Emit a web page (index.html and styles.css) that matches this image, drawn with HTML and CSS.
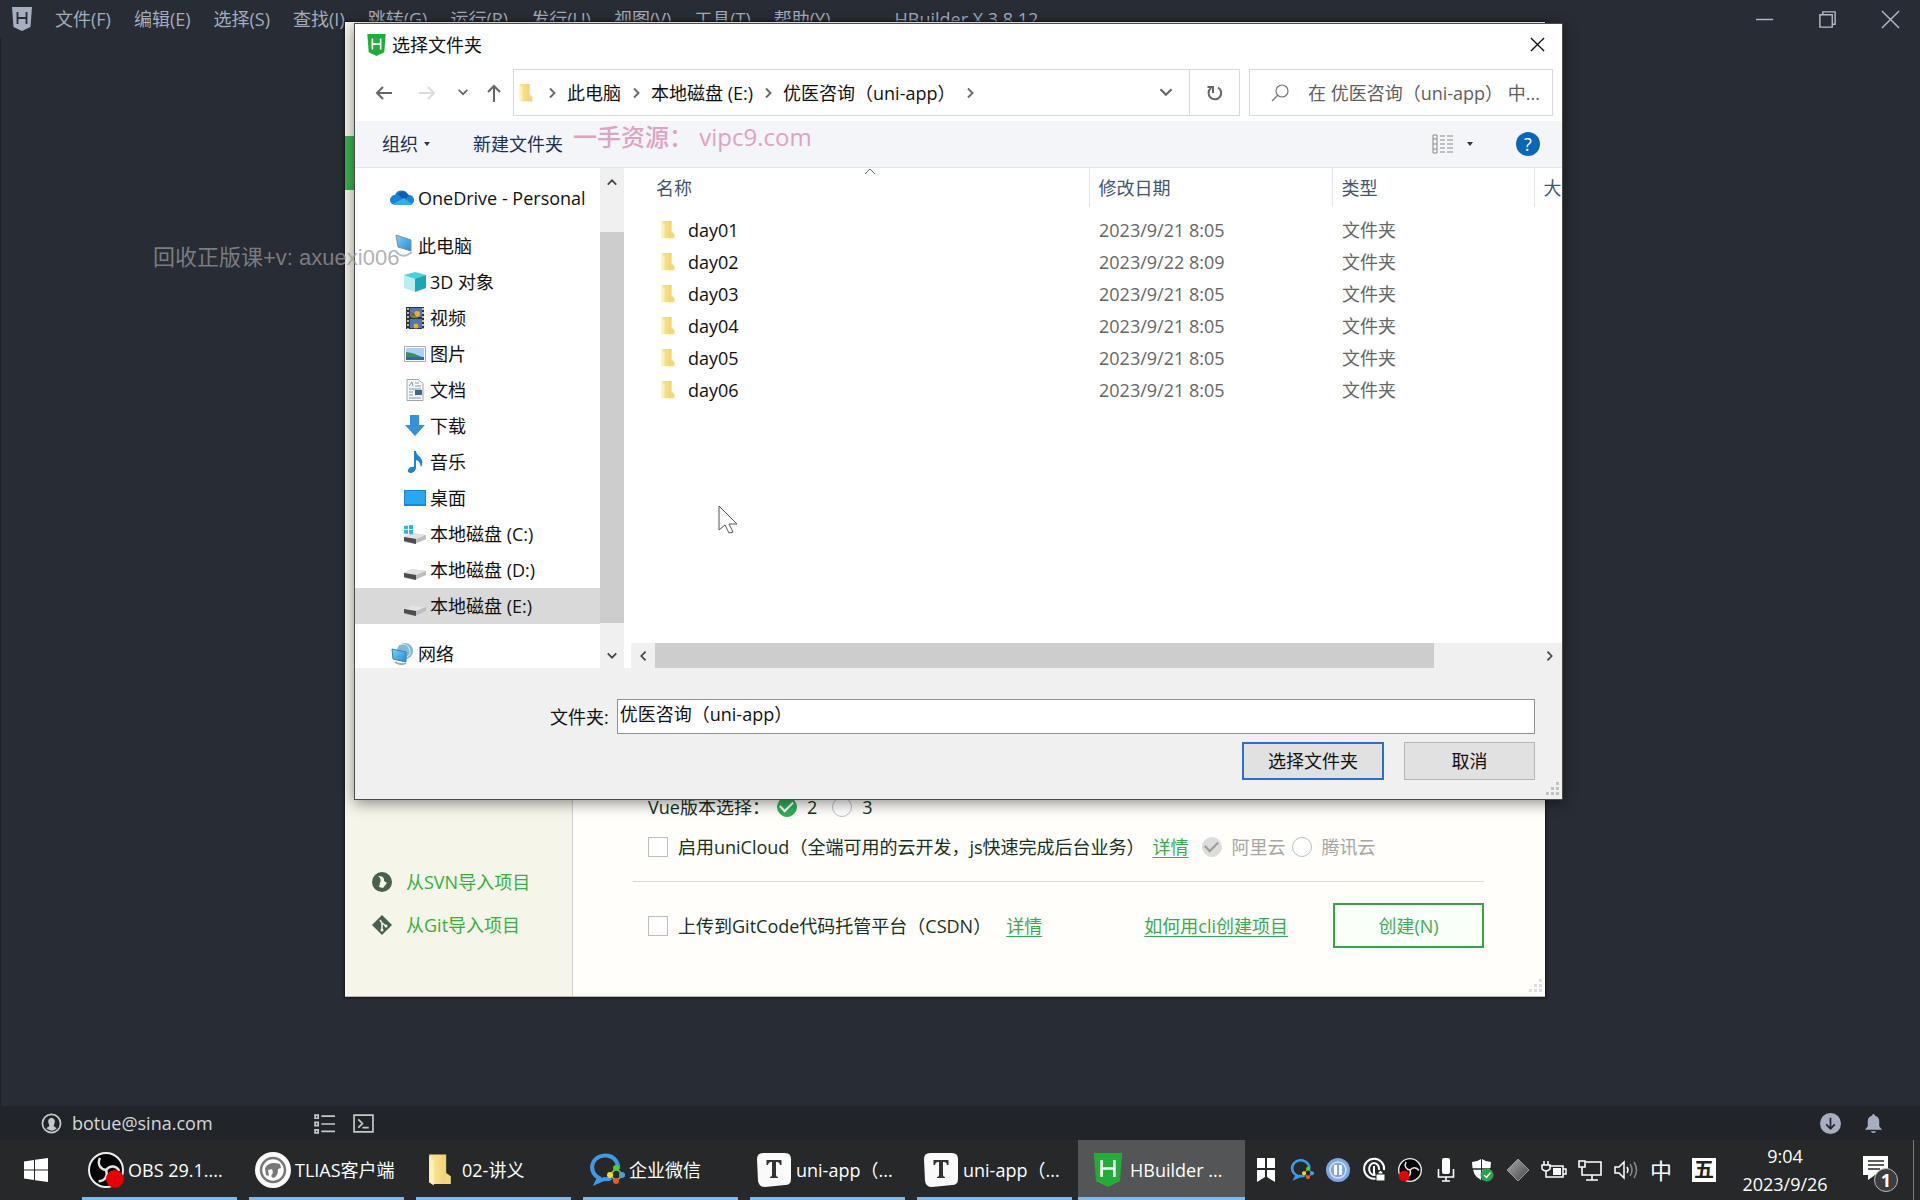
FILE: index.html
```html
<!DOCTYPE html>
<html lang="zh-CN">
<head>
<meta charset="utf-8">
<title>HBuilder X 3.8.12</title>
<link rel="stylesheet" href="styles.css">
</head>
<body>
<svg class="defs" aria-hidden="true">
  <defs>
    <linearGradient id="g-folder" x1="0" x2="1"><stop offset="0" stop-color="#fbe79b"/><stop offset="1" stop-color="#efcf69"/></linearGradient>
    <linearGradient id="g-blue" x1="0" y1="0" x2="1" y2="1"><stop offset="0" stop-color="#7fd0f7"/><stop offset="1" stop-color="#1e8fd8"/></linearGradient>
    <linearGradient id="g-gem" x1="0" y1="0" x2="1" y2="1"><stop offset="0" stop-color="#aaa"/><stop offset="1" stop-color="#444"/></linearGradient>
  </defs>
  <symbol id="folder" viewBox="0 0 16 22"><path d="M1 1h11v15l2 1v3H3L1 19z" fill="url(#g-folder)"/><path d="M1 2l3 3v16l-3-2z" fill="#fff0b5"/><path d="M12 13l3 2v5h-4z" fill="#f5d87c"/></symbol>
  <symbol id="hb" viewBox="0 0 20 24"><path d="M0 0h20l-1.500 20L10 24 1.500 20z"/><path d="M5.500 5v12M14.500 5v12M5.500 11h9" fill="none" stroke="var(--h)" stroke-width="1.800"/></symbol>
  <symbol id="chev" viewBox="0 0 10 12"><path d="M3 1.500L7.500 6 3 10.500" fill="none" stroke="#6d6d6d" stroke-width="2"/></symbol>
  <symbol id="down" viewBox="0 0 14 10"><path d="M2 2l5 5 5-5" fill="none" stroke="currentColor" stroke-width="2"/></symbol>
  <symbol id="drive" viewBox="0 0 22 22"><path d="M0 14l8-4 14 2v4l-11 5-11-2z" fill="#bdbdbd"/><path d="M0 14l8-4 14 2-10 4z" fill="#e3e3e3"/><path d="M0 14l12 2v5L0 18z" fill="#4d4d4d"/></symbol>
  <symbol id="obs" viewBox="0 0 36 36"><circle cx="18" cy="18" r="17" fill="#050505" stroke="#eee" stroke-width="2"/><g fill="none" stroke="#e4e4e4" stroke-width="2.400"><path id="blade" d="M18 18c-6-1-9-6-6-12"/><path d="M18 18c-6-1-9-6-6-12" transform="rotate(120 18 18)"/><path d="M18 18c-6-1-9-6-6-12" transform="rotate(240 18 18)"/></g></symbol>
  <symbol id="wx" viewBox="0 0 36 36"><path d="M29 17A13 12 0 1 0 10 26l-2 4 7-3q4 1 7-1" fill="none" stroke="#3f9ae6" stroke-width="4"/><path d="M27 16l-6 7 6 6 7-6z" fill="none" stroke="#8bc34a" stroke-width="1.500"/><circle cx="27" cy="16" r="3" fill="#47d52b"/><circle cx="21" cy="23" r="3" fill="#f5dc1d"/><circle cx="33" cy="23" r="3" fill="#4a9ee8"/><circle cx="27" cy="29" r="3" fill="#f05a1a"/></symbol>
  <symbol id="typora" viewBox="0 0 36 36"><path d="M7 1h22q6 0 6 6v20q0 6-6 6L9 35q-6 0-7-6L1 7q0-6 6-6z" fill="#fafafa"/><path d="M10.500 8h15v5h-1.500q-.5-3-3-3h-1v13q0 2 2 2v1h-8v-1q2 0 2-2V10h-1q-2.500 0-3 3h-1.500z" fill="#333"/></symbol>
  <symbol id="grip" viewBox="0 0 14 14"><path d="M10 0h3v3h-3zM5 5h3v3H5zM10 5h3v3h-3zM0 10h3v3H0zM5 10h3v3H5zM10 10h3v3h-3z" fill="#c2c2c2"/></symbol>
</svg>

<header class="menubar">
  <svg class="logo"><use href="#hb"/></svg>
  <nav class="menus">
    <button>文件(F)</button><button>编辑(E)</button><button>选择(S)</button><button>查找(I)</button><button>跳转(G)</button><button>运行(R)</button><button>发行(U)</button><button>视图(V)</button><button>工具(T)</button><button>帮助(Y)</button>
  </nav>
  <h1>HBuilder X 3.8.12</h1>
  <div class="wincontrols">
    <button aria-label="最小化"><svg viewBox="0 0 20 20"><path d="M1 10h18"/></svg></button>
    <button aria-label="还原"><svg viewBox="0 0 20 20"><path d="M2 5h13v13H2zM5 5V2h13v13h-3"/></svg></button>
    <button aria-label="关闭"><svg viewBox="0 0 20 20"><path d="M1 1l18 18M19 1L1 19"/></svg></button>
  </div>
</header>

<main class="workspace"></main>

<footer class="statusbar">
  <button class="account"><svg viewBox="0 0 22 22"><circle cx="11" cy="11" r="9.500" fill="none" stroke="#c6c9cc" stroke-width="1.800"/><path d="M11 5a4 4 0 0 1 3 6q-1 2-.5 3l3 2q-5 5-11 0l3-2q.5-1-.5-3a4 4 0 0 1 3-6z" fill="#c6c9cc"/></svg>botue@sina.com</button>
  <div class="panels">
    <button aria-label="大纲"><svg viewBox="0 0 20 20"><path d="M1 2h3v3H1zM1 9h3v3H1zM1 16h3v3H1zM7 3h13M7 10.500h13M7 17.500h13" fill="none" stroke="#c6c9cc" stroke-width="1.600"/></svg></button>
    <button aria-label="终端"><svg viewBox="0 0 20 20"><path d="M1 2h18v16H1zM5 6l4 4-4 4M9 14h6" fill="none" stroke="#c6c9cc" stroke-width="1.600"/></svg></button>
  </div>
  <div class="notices">
    <button aria-label="下载"><svg viewBox="0 0 22 22"><circle cx="11" cy="11" r="11" fill="#a6aec0"/><path d="M11 5v11M6.500 12l4.500 4.500 4.500-4.500" fill="none" stroke="#21252b" stroke-width="1.800"/></svg></button>
    <button aria-label="通知"><svg viewBox="0 0 22 22"><path d="M11 1q1.500 0 1.500 2 4.500 1 4.500 6v5l3 3.500H2L5 14V9q0-5 4.500-6 0-2 1.500-2zM8 19h6q-3 4-6 0z" fill="#a6aec0"/></svg></button>
  </div>
</footer>

<div class="taskbar">
  <button class="start" aria-label="开始"><svg viewBox="0 0 24 24"><path d="M0 3.500L10 2v9.500H0zM11 1.800L24 0v11.500H11zM0 12.500h10V22L0 20.500zM11 12.500h13V24l-13-1.800z" fill="#fff"/></svg></button>
  <div class="tasks">
    <button class="task"><svg viewBox="0 0 36 36"><use href="#obs"/><circle cx="27" cy="27" r="9" fill="#e60000"/></svg>OBS 29.1....</button>
    <button class="task"><svg viewBox="0 0 36 36"><circle cx="18" cy="18" r="18" fill="#fbfbfb"/><circle cx="18" cy="18" r="12" fill="none" stroke="#777" stroke-width="2.500"/><path d="M10 16q4-7 15-4l1 4-3 1q0 8-5 9l-2-2q3-3 1-7l-4 1 1 6-3-1z" fill="#777"/></svg>TLIAS客户端</button>
    <button class="task"><svg class="narrow"><use href="#folder"/></svg>02-讲义</button>
    <button class="task"><svg><use href="#wx"/></svg>企业微信</button>
    <button class="task"><svg><use href="#typora"/></svg>uni-app（...</button>
    <button class="task"><svg><use href="#typora"/></svg>uni-app（...</button>
    <button class="task active"><svg class="green"><use href="#hb"/></svg>HBuilder ...</button>
  </div>
  <div class="tray">
    <svg viewBox="0 0 24 24"><path d="M3 0h8v10H3zM13 0h8v10h-8zM3 12h8v7l-8 5zM13 12h8v12l-8-5z" fill="#fff"/></svg>
    <svg><use href="#wx"/></svg>
    <svg viewBox="0 0 24 24"><circle cx="12" cy="12" r="12" fill="#7fa5ea"/><circle cx="12" cy="12" r="8" fill="none" stroke="#d5e2fb" stroke-width="1.500"/><path d="M9.500 7v10M14.500 7v10" stroke="#fff" stroke-width="3"/></svg>
    <svg viewBox="0 0 24 24"><path d="M14 20.500A10 10 0 1 1 22 12M14 16.500A5 6 0 1 1 17 12M12 8v8" fill="none" stroke="#fff" stroke-width="2"/><path d="M14 16h9v7h-9zM16 16v-2q2.500-3 5 0v2" fill="#fff" stroke="#222" stroke-width="1"/></svg>
    <svg viewBox="0 0 36 36"><use href="#obs"/><circle cx="9" cy="27" r="8" fill="#e60000"/></svg>
    <svg viewBox="0 0 24 24"><rect x="8" y="0" width="8" height="16" rx="2" fill="#fff"/><path d="M4.500 11v8h15v-8M12 19v4M8 23h8" fill="none" stroke="#fff" stroke-width="1.600"/></svg>
    <svg viewBox="0 0 24 24"><path d="M11 1v21Q2 18 2 4q5 0 9-3zM12 1q4 3 9 3 0 14-9 18z" fill="#fff"/><path d="M2 11h20" stroke="#262829" stroke-width="1.500"/><circle cx="17" cy="17" r="6.500" fill="#2ba14b"/><path d="M14 17l2.500 2.500 4-5" fill="none" stroke="#fff" stroke-width="1.500"/></svg>
    <svg viewBox="0 0 24 24"><path d="M12 1l11 11-11 11L1 12z" fill="url(#g-gem)" stroke="#999"/></svg>
    <svg viewBox="0 0 24 24"><path d="M8 8h13v11H8M21 11h3v5h-3M2 3v4M6 3v4M0 7h8v4q-4 4-8 0zM4 13v6h4" fill="none" stroke="#fff" stroke-width="1.500"/><path d="M11 10h8v7h-8z" fill="#fff"/></svg>
    <svg viewBox="0 0 24 24"><path d="M8 4h15v13H4v-6M14 17v5M8 22h12M1 3h6v6H1zM4 9v4" fill="none" stroke="#fff" stroke-width="1.600"/></svg>
    <svg viewBox="0 0 24 24"><path d="M1 9h4l5-5v16l-5-5H1zM13 9q2 3 0 6" fill="none" stroke="#fff" stroke-width="1.500"/><path d="M16 6q4 6 0 12M20 4q5 8 0 16" fill="none" stroke="#888" stroke-width="1.500"/></svg>
    <span class="ime">中</span>
    <span class="wubi">五</span>
  </div>
  <button class="clock"><time>9:04</time><time>2023/9/26</time></button>
  <button class="center" aria-label="通知中心"><svg viewBox="0 0 26 24"><path d="M0 0h25v19H12l-7 5v-5H0z" fill="#fff"/><path d="M5 5h16M5 9h16M5 13h12" stroke="#262829" stroke-width="1.600"/></svg><span class="count">1</span></button>
</div>

<section class="project" aria-label="新建项目">
  <aside class="project-side">
    <div class="project-tab"></div>
    <div class="imports">
      <a href="#svn"><svg viewBox="0 0 20 20"><circle cx="10" cy="10" r="10" fill="#47604f"/><path d="M6 4q7 0 6 5l3 2-4 5-4-1 1-4q2-4-2-7z" fill="#f6f5ea"/></svg>从SVN导入项目</a>
      <a href="#git"><svg viewBox="0 0 20 20"><path d="M10 0l10 10-10 10L0 10z" fill="#47604f"/><path d="M8 5l2 3v7M10 8l4 3" fill="none" stroke="#f6f5ea" stroke-width="1.500"/><circle cx="10" cy="15" r="1.500" fill="#f6f5ea"/><circle cx="14" cy="11" r="1.500" fill="#f6f5ea"/></svg>从Git导入项目</a>
    </div>
  </aside>
  <form class="project-main">
    <div class="row vue" role="radiogroup" aria-label="Vue版本选择"><span>Vue版本选择：</span><label><input class="round" type="radio" name="vue" checked>2</label><label><input class="round" type="radio" name="vue">3</label></div>
    <div class="row cloud"><label class="tick"><input class="box" type="checkbox">启用uniCloud（全端可用的云开发，js快速完成后台业务）</label><a href="#unicloud">详情</a><label class="off first"><input class="round" type="radio" name="cloud" checked disabled>阿里云</label><label class="off"><input class="round" type="radio" name="cloud" disabled>腾讯云</label></div>
    <hr>
    <div class="row create"><label class="tick"><input class="box" type="checkbox">上传到GitCode代码托管平台（CSDN）</label><a href="#gitcode">详情</a><a class="cli" href="#cli">如何用cli创建项目</a><button type="button">创建(N)</button></div>
  </form>
  <svg class="grip faint"><use href="#grip"/></svg>
</section>

<section class="picker" role="dialog" aria-labelledby="picker-title">
  <div class="titlebar"><svg class="green"><use href="#hb"/></svg><h2 id="picker-title">选择文件夹</h2><button aria-label="关闭"><svg viewBox="0 0 16 16"><path d="M1 1l14 14M15 1L1 15" stroke="#111" stroke-width="1.400"/></svg></button></div>
  <div class="navrow">
    <div class="history">
      <button aria-label="后退"><svg viewBox="0 0 18 18"><path d="M17 9H2M8 3L2 9l6 6" stroke="#666" stroke-width="2" fill="none"/></svg></button>
      <button aria-label="前进"><svg viewBox="0 0 18 18"><path d="M1 9h15M10 3l6 6-6 6" stroke="#ddd" stroke-width="2" fill="none"/></svg></button>
      <button class="recent" aria-label="最近位置"><svg><use href="#down"/></svg></button>
      <button aria-label="上移"><svg viewBox="0 0 18 18"><path d="M9 18V2M3 8l6-6 6 6" stroke="#666" stroke-width="2" fill="none"/></svg></button>
    </div>
    <div class="address">
      <svg class="ico-folder"><use href="#folder"/></svg>
      <svg class="sep"><use href="#chev"/></svg><a href="#pc">此电脑</a>
      <svg class="sep"><use href="#chev"/></svg><a href="#e">本地磁盘 (E:)</a>
      <svg class="sep"><use href="#chev"/></svg><a href="#app">优医咨询（uni-app）</a>
      <svg class="sep"><use href="#chev"/></svg>
      <button class="drop" aria-label="展开"><svg><use href="#down"/></svg></button>
      <button class="refresh" aria-label="刷新"><svg viewBox="0 0 18 18"><path d="M12 3.500A6.300 6.300 0 1 1 5 4M1.500 3H7v6" fill="none" stroke="#666" stroke-width="2"/></svg></button>
    </div>
    <label class="search"><svg viewBox="0 0 18 18"><circle cx="11" cy="7" r="6" fill="none" stroke="#777" stroke-width="1.200"/><path d="M7 11l-6 6" stroke="#777" stroke-width="1.200"/></svg><input type="text" aria-label="搜索" placeholder="在 优医咨询（uni-app） 中..."></label>
  </div>
  <div class="toolbar">
    <button>组织<i class="caret"></i></button>
    <button>新建文件夹</button>
    <button class="view" aria-label="更改视图"><svg viewBox="0 0 22 20"><path d="M1 1h4v18H1zM1 5h4M1 10h4M1 15h4" fill="none" stroke="#888"/><path d="M8 2h5M15 2h6M8 6h5M15 6h6M8 10h5M15 10h6M8 14h5M15 14h6M8 18h5M15 18h6" stroke="#8a8a8a" stroke-width="1.200"/></svg><i class="caret"></i></button>
    <button class="help" aria-label="帮助">?</button>
  </div>
  <div class="browser">
    <nav class="tree">
      <a href="#onedrive"><svg viewBox="0 0 24 24"><path d="M5 19a5 5 0 0 1 0-10 7 7 0 0 1 13 0 5 5 0 0 1 2 10z" fill="#1683d8"/><path d="M7 8a7 7 0 0 1 12 2l-5 4z" fill="#0f5fae"/><path d="M3 18l11-6 8 6q-1 1-2 1H5z" fill="#37aeea"/></svg>OneDrive - Personal</a>
      <a class="gap" href="#pc"><svg viewBox="0 0 24 24"><path d="M6 1l15 5v11L8 13z" fill="url(#g-blue)" stroke="#7c8f9a"/><path d="M7 19q6 5 12 1l3-2" fill="none" stroke="#b5bcc0" stroke-width="2"/></svg>此电脑</a>
      <a class="sub" href="#3d"><svg viewBox="0 0 22 22"><path d="M0 4l11 3v14L0 17z" fill="#b9edf0"/><path d="M11 7l11-3v13l-11 4z" fill="#1aa6b7"/><path d="M0 4l11-3 11 3-11 4z" fill="#49d1d8"/></svg>3D 对象</a>
      <a class="sub" href="#video"><svg viewBox="0 0 22 22"><path d="M2 0h18v22H2z" fill="#333"/><path d="M6 1h12v9H6zM6 12h12v9H6z" fill="#5275b5"/><circle cx="13" cy="7" r="3" fill="#e8b321"/><circle cx="9" cy="8" r="2" fill="#b33"/><path d="M6 8h5l3 3H8z" fill="#4a9a3a"/><circle cx="12" cy="19" r="2.500" fill="#e8b321"/><path d="M4 1v21M19 1v21" stroke="#eee" stroke-width="1.500" stroke-dasharray="2 2"/></svg>视频</a>
      <a class="sub" href="#pictures"><svg viewBox="0 0 22 22"><path d="M.5 3.500h21v15H.5z" fill="#fff" stroke="#aaa"/><path d="M2 5h18v12H2z" fill="#a9d4f5"/><path d="M2 9q6 0 18 6v1H2z" fill="#3f8a6a"/><path d="M2 14h18v3H2z" fill="#2d6ba8"/></svg>图片</a>
      <a class="sub" href="#docs"><svg viewBox="0 0 22 22"><path d="M3 .5h11l5 4v17H3z" fill="#f7fafc" stroke="#9aa5ad"/><path d="M5 7l3-4 1 4M11 4h4M11 7h6M5 10h12M5 13h4M5 16h4M5 19h12" fill="none" stroke="#7d98ae"/><path d="M11 11h7v5h-7z" fill="#39699b"/></svg>文档</a>
      <a class="sub" href="#downloads"><svg viewBox="0 0 22 22"><path d="M6 0h9v10h6L11 21 1 10h5z" fill="#3492dc"/></svg>下载</a>
      <a class="sub" href="#music"><svg viewBox="0 0 22 22"><path d="M10 0h2q0 3 4 6 4 5 1 10-1-6-5-7v8q-1 5-6 5-3-1-2-3 2-4 6-3z" fill="#1c86d6"/></svg>音乐</a>
      <a class="sub" href="#desktop"><svg viewBox="0 0 22 22"><path d="M0 3h22v16H0z" fill="#1787d0"/><path d="M1 4h20v13H1z" fill="#25a8f5"/></svg>桌面</a>
      <a class="sub" href="#c"><svg viewBox="0 0 22 22"><use href="#drive"/><path d="M0 3l4-.6V6H0zM5 2.200L9 2v4H5zM0 7h4v4l-4-.6zM5 7h4v4.500L5 11z" fill="#29b6e8"/></svg>本地磁盘 (C:)</a>
      <a class="sub" href="#d"><svg><use href="#drive"/></svg>本地磁盘 (D:)</a>
      <a class="sub selected" href="#e"><svg><use href="#drive"/></svg>本地磁盘 (E:)</a>
      <a class="gap" href="#net"><svg viewBox="0 0 24 24"><circle cx="15" cy="9" r="8" fill="#7fb9d2"/><path d="M10 3q6-3 9 3t-2 9" fill="none" stroke="#d9eef5"/><path d="M2 7l14 3v10L3 17z" fill="url(#g-blue)" stroke="#3b7da4"/><path d="M5 20q6 4 11 1" fill="none" stroke="#aaa" stroke-width="2"/></svg>网络</a>
    </nav>
    <div class="vscroll"><svg class="flip"><use href="#down"/></svg><div class="vthumb"></div><svg><use href="#down"/></svg></div>
    <div class="files">
      <table>
        <colgroup><col><col class="c-date"><col class="c-type"><col class="c-size"></colgroup>
        <thead><tr><th class="sorted">名称<svg viewBox="0 0 12 7"><path d="M1 6l5-5 5 5" fill="none" stroke="#666"/></svg></th><th>修改日期</th><th>类型</th><th>大</th></tr></thead>
        <tbody>
          <tr><td><svg><use href="#folder"/></svg>day01</td><td>2023/9/21 8:05</td><td>文件夹</td><td></td></tr>
          <tr><td><svg><use href="#folder"/></svg>day02</td><td>2023/9/22 8:09</td><td>文件夹</td><td></td></tr>
          <tr><td><svg><use href="#folder"/></svg>day03</td><td>2023/9/21 8:05</td><td>文件夹</td><td></td></tr>
          <tr><td><svg><use href="#folder"/></svg>day04</td><td>2023/9/21 8:05</td><td>文件夹</td><td></td></tr>
          <tr><td><svg><use href="#folder"/></svg>day05</td><td>2023/9/21 8:05</td><td>文件夹</td><td></td></tr>
          <tr><td><svg><use href="#folder"/></svg>day06</td><td>2023/9/21 8:05</td><td>文件夹</td><td></td></tr>
        </tbody>
      </table>
      <div class="hscroll"><svg class="left"><use href="#down"/></svg><div class="hthumb"></div><svg class="right"><use href="#down"/></svg></div>
    </div>
  </div>
  <form class="confirm">
    <div class="field"><label for="folder-name">文件夹:</label><input id="folder-name" type="text" value="优医咨询（uni-app）"></div>
    <div class="actions"><button class="primary" type="button">选择文件夹</button><button type="button">取消</button></div>
  </form>
  <svg class="grip"><use href="#grip"/></svg>
</section>

<p class="mark mark-pink">一手资源： vipc9.com</p>
<p class="mark mark-gray">回收正版课+v: axuexi006</p>
<svg class="cursor" viewBox="0 0 20 30"><path d="M1 1v24l6-5 4 8 4-1-4-8h8z" fill="#fff" stroke="#555"/></svg>
</body>
</html>
```
FILE: styles.css
```css
* { box-sizing: border-box; }
body {
  margin: 0;
  height: 100vh;
  overflow: hidden;
  position: relative;
  display: flex;
  flex-direction: column;
  background: #282c34;
  color: #111;
  font: 18px/24px "Open Sans", "Noto Sans CJK SC", sans-serif;
}
button, input { font: inherit; color: inherit; }
button { background: none; border: 0; padding: 0; white-space: nowrap; }
a { color: inherit; text-decoration: none; }
h1, h2, p { margin: 0; font: inherit; }
svg { display: block; flex: none; overflow: visible; }
.defs { position: absolute; width: 0; height: 0; }
.green { fill: #22ac38; --h: #fff; }

/* Editor menu bar */
.menubar {
  display: flex;
  align-items: center;
  height: 38px;
  padding: 0 20px 0 12px;
  color: #a3abbd;
}
.logo { width: 20px; height: 24px; fill: #a6aec0; --h: #282c34; }
.menus { display: flex; gap: 23px; margin-left: 23px; }
.menubar h1 { margin-left: 64px; }
.wincontrols { display: flex; gap: 44px; margin-left: auto; }
.wincontrols svg { width: 19px; height: 19px; fill: none; stroke: #b5bac4; stroke-width: 1.5; }
.workspace { flex: 1; border-left: 1px solid #1e2126; }

/* Editor status bar */
.statusbar {
  display: flex;
  align-items: center;
  height: 34px;
  padding: 0 36px 0 41px;
  background: #21252a;
  color: #d6d8da;
}
.account { display: flex; align-items: center; gap: 10px; width: 273px; }
.statusbar svg { width: 21px; height: 21px; }
.panels { display: flex; gap: 18px; }
.notices { display: flex; gap: 22px; margin-left: auto; }

/* Desktop taskbar */
.taskbar {
  display: flex;
  align-items: center;
  height: 60px;
  background: #262829;
  color: #fff;
}
.start { width: 76px; padding-left: 24px; }
.start svg { width: 24px; height: 24px; }
.tasks { display: flex; align-self: stretch; }
.task {
  position: relative;
  display: flex;
  align-items: center;
  gap: 4px;
  width: 167px;
  padding-left: 12px;
  overflow: hidden;
}
.task svg { width: 36px; height: 36px; }
.task svg.narrow, .task svg.green { height: 34px; }
.task::after {
  content: "";
  position: absolute;
  left: 6px;
  right: 6px;
  bottom: 0;
  height: 3px;
  background: #83b9e8;
}
.task.active { background: #535556; }
.task.active::after { left: 0; right: 0; }
.tray { display: flex; align-items: center; gap: 12px; margin-left: 9px; }
.tray svg { width: 24px; height: 24px; }
.ime { width: 22px; font-size: 22px; text-align: center; }
.wubi {
  width: 24px;
  margin-left: 8px;
  background: #fff;
  color: #222;
  font-size: 20px;
  font-weight: 700;
  text-align: center;
}
.clock { display: flex; flex-direction: column; gap: 4px; width: 104px; margin-left: 17px; align-items: center; }
.center { position: relative; margin-left: 26px; padding: 0 0 4px; }
.center svg { width: 26px; height: 24px; }
.count {
  position: absolute;
  left: 11px;
  top: 12px;
  width: 24px;
  height: 24px;
  border: 1px solid #bbb;
  border-radius: 50%;
  background: #3b3d3e;
  line-height: 22px;
  font-weight: 700;
}
.taskbar::after { content: ""; align-self: stretch; width: 1px; margin: 0 6px 0 auto; background: #777; }

/* New-project window */
.project {
  position: absolute;
  inset: 22px 375px 203px 345px;
  display: flex;
  background: #fffefa;
  border-bottom: 1px solid #b9bab8;
  box-shadow: 0 0 2px 1px #15171a;
}
.project-side {
  display: flex;
  flex-direction: column;
  width: 228px;
  padding: 114px 0 50px;
  background: #f6f5ea;
  border-right: 1px solid #cfcfcb;
}
.project-tab { height: 54px; background: #38b24b; }
.imports { margin-top: auto; padding-left: 27px; }
.imports a { display: flex; align-items: center; gap: 14px; height: 43px; color: #35b13c; }
.imports svg { width: 20px; height: 20px; }
.project-main {
  flex: 1;
  display: flex;
  flex-direction: column;
  justify-content: flex-end;
  padding: 0 61px 48px 60px;
  color: #153020;
}
.row { display: flex; align-items: center; height: 40px; padding-left: 15px; white-space: nowrap; }
.row label { display: flex; align-items: center; gap: 10px; }
.row a { color: #37ab50; text-decoration: underline; text-underline-offset: 3px; text-decoration-thickness: 1px; }
.vue span { margin-right: 7px; }
.vue label { margin-right: 15px; }
.project input { appearance: none; flex: none; margin: 0; width: 20px; height: 20px; border: 1px solid #bdbdbd; background: #fff; }
.project .round { border-radius: 50%; display: grid; place-items: center; }
.project .round:checked { background: #31b057; border-color: #31b057; }
.round:checked::before { content: ""; width: 11px; height: 6px; border: solid #fff; border-width: 0 0 2px 2px; rotate: -45deg; translate: 0 -2px; }
.project .round:disabled:checked { background: #dcdcdc; border-color: #dcdcdc; }
.round:disabled:checked::before { border-color: #999; }
.row .off { color: #a5a5a5; margin-right: 6px; }
.row .off.first { margin-left: 13px; }
.cloud a { margin-left: 8px; }
.project hr { width: 100%; height: 1px; margin: 14px 0 21px; border: 0; background: #dadad6; }
.create { height: 45px; }
.create a { margin-left: 15px; }
.create .cli { margin-left: auto; }
.create button { width: 151px; height: 45px; margin-left: 45px; border: 2px solid #35a544; background: #fafffa; color: #41ad55; }
.grip { position: absolute; right: 2px; bottom: 3px; width: 14px; height: 14px; }
.faint { opacity: 0.5; }

/* Folder picker window */
.picker {
  position: absolute;
  inset: 23px 357px 400px 354px;
  display: flex;
  flex-direction: column;
  border: 1px solid #4a4a4a;
  background: #fff;
  box-shadow: 0 3px 14px rgba(0, 0, 0, 0.45);
}
.titlebar { display: flex; align-items: center; gap: 6px; height: 41px; padding: 0 17px 0 12px; }
.titlebar .green { width: 19px; height: 22px; }
.titlebar button { margin-left: auto; }
.titlebar button svg { width: 15px; height: 15px; }
.navrow { display: flex; height: 56px; padding: 4px 9px 5px 20px; }
.history { display: flex; align-items: center; width: 138px; }
.history svg { width: 18px; height: 18px; }
.history button:nth-child(2) { margin-left: 25px; }
.history .recent { margin: 0 16px 0 21px; color: #666; }
.history .recent svg { width: 12px; height: 9px; }
.address { flex: 1; display: flex; align-items: center; padding-left: 4px; border: 1px solid #d9d9d9; white-space: nowrap; }
.ico-folder { width: 16px; height: 20px; margin-right: 4px; }
.sep { width: 10px; height: 12px; margin: 0 10px 0 9px; }
.address a + .sep { margin-left: 10px; }
.drop { margin-left: auto; padding-right: 15px; color: #666; }
.drop svg { width: 16px; height: 11px; }
.refresh { align-self: stretch; width: 50px; border-left: 1px solid #d9d9d9; }
.refresh svg { width: 18px; height: 18px; margin: 0 auto; }
.search { display: flex; align-items: center; gap: 19px; width: 304px; margin-left: 9px; padding-left: 21px; border: 1px solid #d9d9d9; color: #555; }
.search svg { width: 18px; height: 18px; }
.search input { flex: 1; min-width: 0; padding: 0; border: 0; background: none; }
.search input::placeholder { color: #5e5e5e; opacity: 1; }
.toolbar {
  display: flex;
  align-items: center;
  height: 47px;
  padding: 0 22px 0 27px;
  background: #f4f5f8;
  border-bottom: 1px solid #e4e6ea;
  color: #1b2f55;
}
.toolbar button { display: flex; align-items: center; gap: 6px; margin-right: 43px; }
.caret { border: solid transparent; border-width: 4px 3px 0; border-top-color: #333; }
.toolbar .view { gap: 13px; margin-left: auto; }
.view svg { width: 22px; height: 20px; }
.toolbar .help {
  justify-content: center;
  width: 24px;
  height: 24px;
  margin: 0;
  border-radius: 50%;
  background: #0b66b8;
  color: #fff;
}
.browser { flex: 1; min-height: 0; display: flex; }
.tree { width: 245px; padding-top: 12px; overflow: hidden; }
.tree a { display: flex; align-items: center; gap: 4px; height: 36px; padding-left: 35px; white-space: nowrap; }
.tree svg { width: 24px; height: 24px; }
.tree .gap { margin-top: 12px; }
.tree .sub { padding-left: 49px; }
.tree .sub svg { width: 22px; height: 22px; }
.tree .selected { background: #d9d9d9; }
.vscroll { display: flex; flex-direction: column; align-items: center; width: 24px; padding: 9px 0 7px; background: #f0f0f0; color: #444; }
.vscroll svg { width: 12px; height: 10px; }
.vthumb { flex: 1; align-self: stretch; margin: 45px 0 28px; background: #cdcdcd; }
.flip { rotate: 180deg; }
.files { flex: 1; display: flex; flex-direction: column; justify-content: space-between; min-width: 0; margin-left: 7px; overflow: hidden; }
.files table { width: 100%; table-layout: fixed; border-collapse: collapse; }
.c-date { width: 243px; }
.c-type { width: 202px; }
.c-size { width: 28px; }
.files th { position: relative; height: 39px; padding: 0 0 0 9px; border-right: 1px solid #e5e5e5; color: #43546e; font-weight: 400; text-align: left; white-space: nowrap; }
.files th:first-child { padding-left: 25px; }
.files th:last-child { border: 0; }
.sorted svg { position: absolute; left: 51%; top: 0; width: 12px; height: 7px; }
.files tbody::before { content: ""; display: block; height: 7px; }
.files td { height: 32px; padding: 0 0 0 10px; color: #666; }
.files td:first-child { display: flex; align-items: center; gap: 12px; padding-left: 29px; color: #111; }
.files td svg { width: 16px; height: 20px; }
.hscroll { display: flex; align-items: center; height: 25px; background: #f0f0f0; color: #444; }
.hscroll svg { width: 12px; height: 10px; margin: 0 6px; }
.left { rotate: 90deg; }
.right { rotate: -90deg; }
.hthumb { flex: 1; align-self: stretch; margin-right: 104px; background: #cdcdcd; }
.confirm { padding: 31px 27px 19px 195px; background: #f0f0f0; }
.field { display: flex; align-items: center; gap: 8px; }
.field input { flex: 1; height: 35px; padding: 0 2px 8px; border: 1px solid #8f9296; background: #fff; }
.actions { display: flex; justify-content: flex-end; gap: 20px; margin-top: 8px; }
.actions button { width: 131px; height: 38px; border: 1px solid #b5b5b5; background: #e1e1e1; }
.actions .primary { width: 142px; border: 2px solid #2a6fc9; }

/* Overlays on the recording */
.mark { position: absolute; white-space: nowrap; }
.mark-pink { left: 573px; top: 122px; color: #dea3c1; font-size: 24px; line-height: 30px; font-weight: 500; }
.mark-gray { left: 153px; top: 244px; color: rgba(150, 152, 156, 0.75); font: 22px/28px "Liberation Sans", "Noto Sans CJK SC", sans-serif; }
.cursor { position: absolute; left: 718px; top: 505px; width: 20px; height: 30px; }
```
